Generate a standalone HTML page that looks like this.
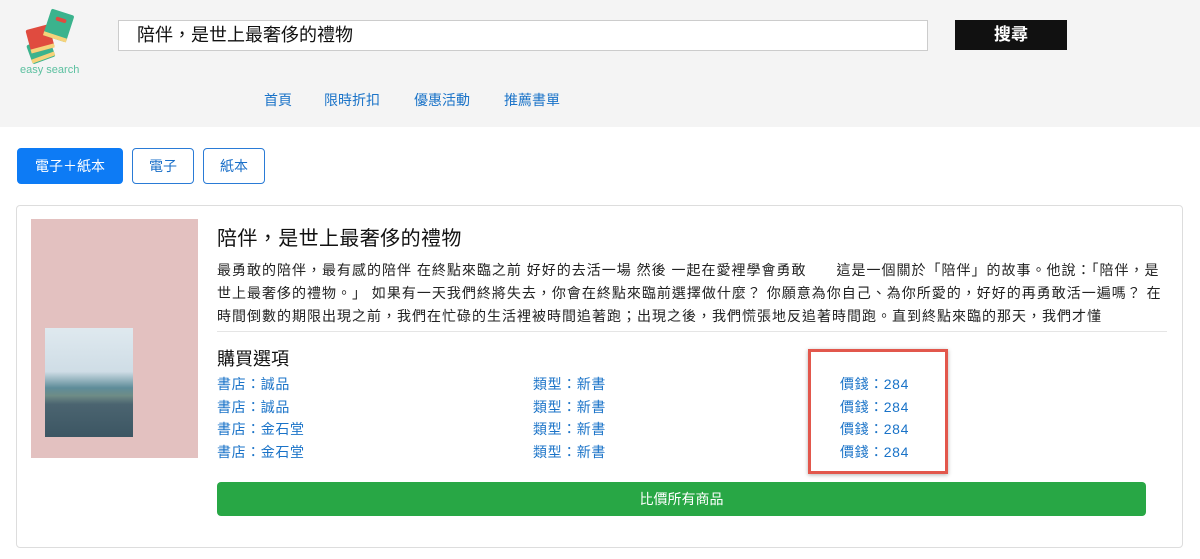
<!DOCTYPE html>
<html><head><meta charset="utf-8"><style>
body{margin:0;width:1200px;height:559px;background:#fff;font-family:"Liberation Sans","Noto Sans CJK TC",sans-serif;position:relative;overflow:hidden;color:#212529}
.hdr{position:absolute;left:0;top:0;width:1200px;height:127px;background:#f4f4f4}
.abs{position:absolute}
.inp{left:118px;top:20px;border:1px solid #ccc;background:#fff;font-size:18px;line-height:29px;padding-left:18px;box-sizing:border-box;width:810px;height:31px;color:#111}
.btn{left:955px;top:20px;width:112px;height:30px;background:#111;color:#fff;font-weight:bold;font-size:17px;text-align:center;line-height:30px}
.nav{top:90px;font-size:14px;color:#1a73c8}
.tab{top:148px;height:36px;border:1px solid #2a7bd6;border-radius:4px;font-size:14px;line-height:35px;text-align:center;color:#1a6fc8;box-sizing:border-box}
.card{left:16px;top:205px;width:1167px;height:343px;border:1px solid #ddd;border-radius:4px;box-sizing:border-box}
.desc{left:217px;top:259px;width:980px;font-size:14px;line-height:23px;color:#222;white-space:nowrap;letter-spacing:1px}
.lk{font-size:14px;color:#1a73c8;line-height:22.5px;letter-spacing:.6px}
</style></head><body>
<div class="hdr"></div>
<svg class="abs" style="left:18px;top:8px" width="64" height="62" viewBox="0 0 64 62">
<g transform="rotate(-20 25 40)"><rect x="10" y="32" width="24" height="20" rx="2" fill="#3bb38d"/><rect x="10" y="47" width="24" height="4" fill="#f6d27a"/></g>
<g transform="rotate(-15 25 30)"><rect x="10" y="18" width="24" height="24" rx="2" fill="#e04b3f"/><rect x="10" y="38" width="24" height="4" fill="#f6d27a"/></g>
<g transform="rotate(18 42 20)"><rect x="28" y="4" width="24" height="28" rx="2" fill="#3bb38d"/><rect x="28" y="28" width="24" height="4" fill="#f6d27a"/><rect x="35" y="10" width="11" height="4" rx="2" fill="#e04b3f"/></g>
</svg>
<div class="abs" style="left:20px;top:64px;font-size:11px;color:#5cc0a0">easy search</div>
<div class="abs inp">陪伴，是世上最奢侈的禮物</div>
<div class="abs btn">搜尋</div>
<div class="abs nav" style="left:264px">首頁</div>
<div class="abs nav" style="left:324px">限時折扣</div>
<div class="abs nav" style="left:414px">優惠活動</div>
<div class="abs nav" style="left:504px">推薦書單</div>
<div class="abs tab" style="left:17px;width:106px;background:#0d7bf5;border-color:#0d7bf5;color:#fff">電子＋紙本</div>
<div class="abs tab" style="left:132px;width:62px">電子</div>
<div class="abs tab" style="left:203px;width:62px">紙本</div>
<div class="abs card"></div>
<div class="abs" style="left:31px;top:219px;width:167px;height:239px;background:#e3c1c0"></div>
<div class="abs" style="left:45px;top:328px;width:88px;height:109px;background:linear-gradient(#dfe9ef 0,#cfdde6 40%,#5e8c99 55%,#6f8c86 62%,#4b6470 70%,#3c5663 100%)"></div>
<div class="abs" style="left:217px;top:222px;font-size:20px;color:#111;letter-spacing:.4px">陪伴，是世上最奢侈的禮物</div>
<div class="abs desc">最勇敢的陪伴，最有感的陪伴 在終點來臨之前 好好的去活一場 然後 一起在愛裡學會勇敢　　這是一個關於「陪伴」的故事。他說：「陪伴，是<br>世上最奢侈的禮物。」 如果有一天我們終將失去，你會在終點來臨前選擇做什麼？ 你願意為你自己、為你所愛的，好好的再勇敢活一遍嗎？ 在<br>時間倒數的期限出現之前，我們在忙碌的生活裡被時間追著跑；出現之後，我們慌張地反追著時間跑。直到終點來臨的那天，我們才懂</div>
<div class="abs" style="left:217px;top:331px;width:950px;height:1px;background:#e5e5e5"></div>
<div class="abs" style="left:217px;top:345px;font-size:18px;color:#111">購買選項</div>
<div class="abs lk" style="left:217px;top:373px">書店：誠品<br>書店：誠品<br>書店：金石堂<br>書店：金石堂</div>
<div class="abs lk" style="left:533px;top:373px">類型：新書<br>類型：新書<br>類型：新書<br>類型：新書</div>
<div class="abs lk" style="left:840px;top:373px">價錢：284<br>價錢：284<br>價錢：284<br>價錢：284</div>
<div class="abs" style="left:808px;top:349px;width:140px;height:125px;border:3px solid #e2574c;box-sizing:border-box;box-shadow:0 1px 4px rgba(0,0,0,.3)"></div>
<div class="abs" style="left:217px;top:482px;width:929px;height:34px;background:#28a745;border-radius:4px;color:#fff;font-size:14px;text-align:center;line-height:34px">比價所有商品</div>
</body></html>
